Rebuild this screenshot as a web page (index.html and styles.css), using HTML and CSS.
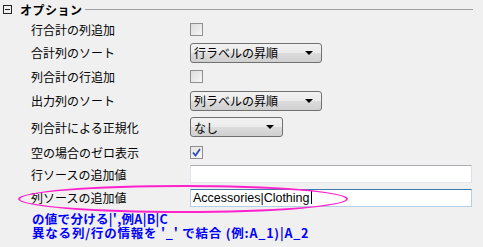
FILE: index.html
```html
<!DOCTYPE html>
<html lang="ja">
<head>
<meta charset="utf-8">
<link rel="stylesheet" href="styles.css">
</head>
<body>
<div class="panel">
  <div class="header">
    <span class="toggle"></span>
    <span class="title">オプション</span>
    <span class="rule"></span>
  </div>
  <div class="grid">
    <div class="label r1">行合計の列追加</div>
    <div class="ctl r1"><span class="check"></span></div>

    <div class="label r2">合計列のソート</div>
    <div class="ctl r2"><div class="select wide"><span>行ラベルの昇順</span><span class="arrow"></span></div></div>

    <div class="label r3">列合計の行追加</div>
    <div class="ctl r3"><span class="check"></span></div>

    <div class="label r4">出力列のソート</div>
    <div class="ctl r4"><div class="select wide"><span>列ラベルの昇順</span><span class="arrow"></span></div></div>

    <div class="label r5">列合計による正規化</div>
    <div class="ctl r5"><div class="select narrow"><span>なし</span><span class="arrow"></span></div></div>

    <div class="label r6">空の場合のゼロ表示</div>
    <div class="ctl r6"><span class="check checked"><svg width="9" height="9" viewBox="0 0 9 9"><path d="M1 4.5 L3.5 7.5 L8 1" fill="none" stroke="#2b4fb8" stroke-width="1.8"/></svg></span></div>

    <div class="label r7">行ソースの追加値</div>
    <div class="ctl r7"><div class="input"></div></div>

    <div class="label r8">列ソースの追加値</div>
    <div class="ctl r8"><div class="input focus">Accessories|Clothing<span class="caret"></span></div></div>
  </div>
  <div class="note">
    <div class="line first">の値で分ける|',例A|B|C</div>
    <div class="line">異なる列/行の情報を '_' で結合 (例:A_1)|A_2</div>
  </div>
  <div class="ellipse"></div>
</div>
</body>
</html>
```
FILE: styles.css
```css
html, body {
  margin: 0;
  padding: 0;
  background: #f0f0f0;
}
body {
  width: 483px;
  height: 247px;
  overflow: hidden;
  font-family: "Noto Sans CJK JP", "Liberation Sans", sans-serif;
  font-size: 12px;
  color: #000;
}
.panel {
  position: relative;
  width: 483px;
  height: 247px;
}
.header {
  display: flex;
  align-items: center;
  height: 18px;
  padding-left: 3px;
  padding-right: 10px;
}
.toggle {
  position: relative;
  width: 7px;
  height: 7px;
  border: 1px solid #222;
  flex: none;
}
.toggle::after {
  content: "";
  position: absolute;
  left: 1px;
  right: 1px;
  top: 3px;
  height: 1px;
  background: #222;
}
.title {
  font-weight: bold;
  margin-left: 8px;
  letter-spacing: 0.5px;
}
.rule {
  flex: 1;
  height: 1px;
  background: #a0a0a0;
  margin-left: 2px;
  margin-top: 1px;
}
.grid {
  display: grid;
  grid-template-columns: 190px 1fr;
  grid-template-rows: 22px 25px 23px 25px 28px 23px 20px 27px;
}
.label {
  display: flex;
  align-items: center;
  padding-left: 31px;
  white-space: nowrap;
}
.ctl {
  display: flex;
  align-items: center;
}
.check {
  box-sizing: border-box;
  width: 13px;
  height: 13px;
  border: 1px solid #8f8f8f;
  background: linear-gradient(135deg, #dcdcdc, #f6f6f6);
  display: flex;
  align-items: center;
  justify-content: center;
}
.check.checked {
  background: linear-gradient(135deg, #e4e4e4, #f8f8f8);
}
.select {
  box-sizing: border-box;
  height: 20px;
  border: 1px solid #707070;
  border-radius: 3px;
  background: linear-gradient(#f2f2f2 0%, #ebebeb 50%, #dddddd 51%, #cfcfcf 100%);
  display: flex;
  align-items: center;
  justify-content: space-between;
  padding: 0 8px 0 3px;
  white-space: nowrap;
}
.select.wide { width: 132px; }
.select.narrow { width: 93px; }
.arrow {
  width: 0;
  height: 0;
  border-left: 4px solid transparent;
  border-right: 4px solid transparent;
  border-top: 4px solid #000;
}
.input {
  box-sizing: border-box;
  width: 282px;
  height: 18px;
  background: #fff;
  border: 1px solid #abadb3;
  border-left-color: #e2e3ea;
  border-right-color: #dbdfe6;
  border-bottom-color: #e3e9ef;
  font-family: "Liberation Sans", sans-serif;
  font-size: 12.5px;
  display: flex;
  align-items: center;
  padding-left: 2px;
}
.input.focus {
  border-color: #3d7bad;
  border-left-color: #b5cfe7;
  border-right-color: #b5cfe7;
  border-bottom-color: #b5cfe7;
}
.caret {
  width: 1px;
  height: 13px;
  background: #000;
  margin-left: 1px;
}
.note {
  color: #0000ff;
  font-weight: bold;
  font-size: 12.5px;
  letter-spacing: 0.8px;
  padding-left: 32px;
  padding-top: 1px;
  white-space: nowrap;
}
.line {
  line-height: 14px;
}
.line.first {
  letter-spacing: 0.3px;
}
.ellipse {
  position: absolute;
  left: 18px;
  top: 185px;
  width: 330px;
  height: 28px;
  box-sizing: border-box;
  border: 2px solid #ff22cc;
  border-radius: 50%;
  pointer-events: none;
}
```
